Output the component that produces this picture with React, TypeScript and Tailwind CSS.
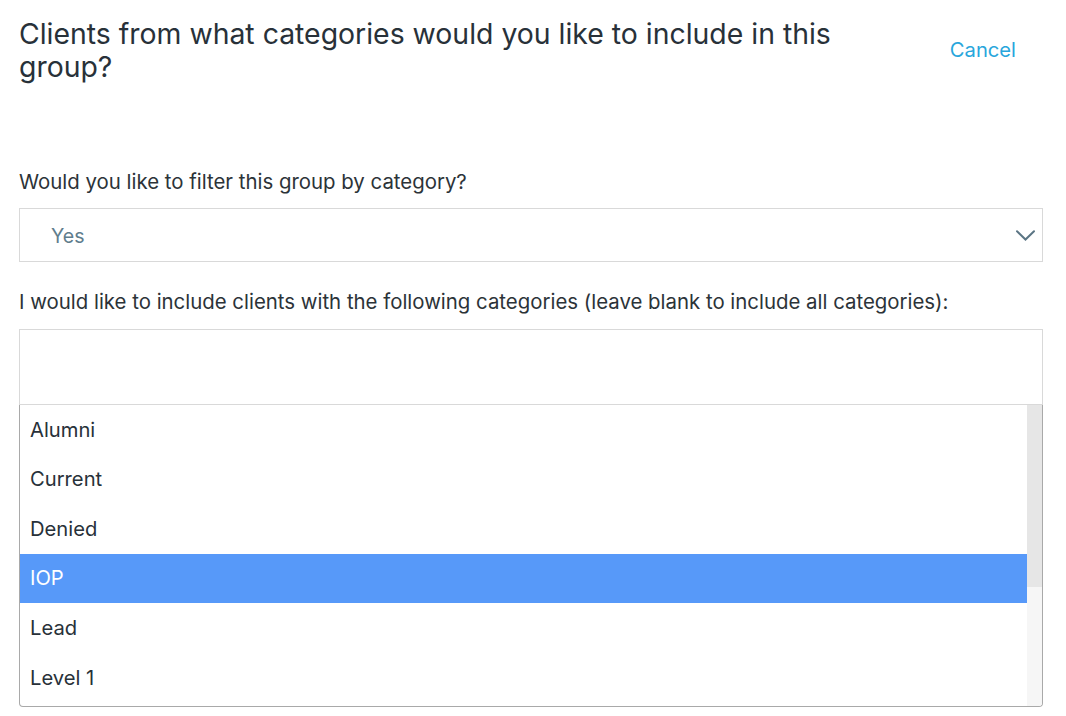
import React from "react";

const categories = ["Alumni", "Current", "Denied", "IOP", "Lead", "Level 1"];
const highlighted = "IOP";

function Chevron() {
  return (
    <svg width="19" height="11" viewBox="0 0 19 11" fill="none">
      <path d="M1 1.2 L9.5 9.5 L18 1.2" stroke="#5b7584" strokeWidth="2" strokeLinecap="round" />
    </svg>
  );
}

export default function App() {
  return (
    <main className="min-h-[716px] bg-white pl-[19px] pr-[23px] text-[#283139] font-['Inter','Liberation_Sans',sans-serif]">
      <div className="flex items-start justify-between pt-[17px]">
        <h1 className="w-[840px] text-[28.4px] leading-[33px] font-normal">
          Clients from what categories would you like to include in this group?
        </h1>
        <button className="mt-[21px] mr-[27px] text-[20.2px] leading-[24px] text-[#28a6dc]">Cancel</button>
      </div>

      <div className="mt-[87px] text-[20.4px] leading-[24px] text-[#2c3338]">
        Would you like to filter this group by category?
      </div>
      <div className="mt-[14px] flex h-[54px] items-center justify-between border border-[#d9d9d9] pl-[31px] pr-[7px]">
        <span className="pt-[3px] text-[19.6px] text-[#5f7d8d]">Yes</span>
        <Chevron />
      </div>

      <div className="mt-[28px] text-[20.4px] leading-[24px] text-[#2c3338]">
        I would like to include clients with the following categories (leave blank to include all categories):
      </div>
      <div className="mt-[15px] h-[76px] border border-[#d9d9d9]" />
      <div className="flex h-[302px] rounded-b-[4px] border-x border-b border-[#a9a9a9] overflow-hidden">
        <ul className="flex-1">
          {categories.map((c) => (
            <li
              key={c}
              className={
                c === highlighted
                  ? "flex h-[49.6px] items-center bg-[#5799f9] pl-[10px] text-[20.2px] text-white"
                  : "flex h-[49.6px] items-center pl-[10px] text-[20.2px] text-[#283139]"
              }
            >
              {c}
            </li>
          ))}
        </ul>
        <div className="flex w-[15px] flex-col bg-[#f6f6f6]">
          <div className="h-[182px] bg-[#e6e6e6]" />
        </div>
      </div>
    </main>
  );
}
